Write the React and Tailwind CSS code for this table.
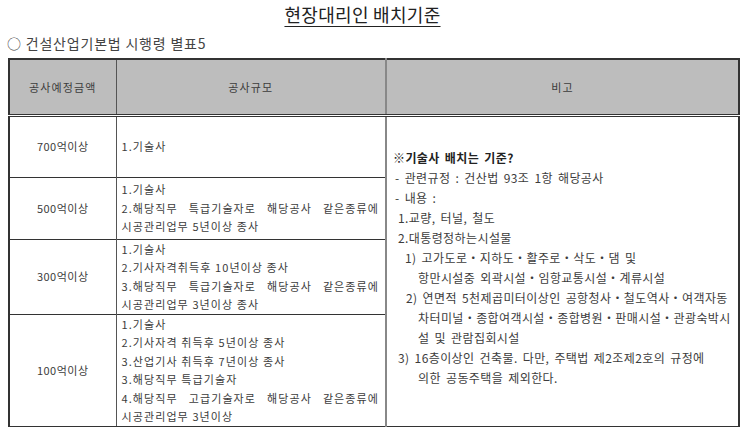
import React from 'react';

const font = { fontFamily: '"Noto Sans CJK KR", "Noto Sans", sans-serif' };

const rows = [
  { amount: '700억이상', h: 'h-[62px]', lines: [{ t: '1.기술사' }] },
  {
    amount: '500억이상',
    h: 'h-[62px]',
    lines: [
      { t: '1.기술사' },
      { t: '2.해당직무 특급기술자로 해당공사 같은종류에', j: true },
      { t: '시공관리업무 5년이상 종사' },
    ],
  },
  {
    amount: '300억이상',
    h: 'h-[74px]',
    lines: [
      { t: '1.기술사' },
      { t: '2.기사자격취득후 10년이상 종사' },
      { t: '3.해당직무 특급기술자로 해당공사 같은종류에', j: true },
      { t: '시공관리업무 3년이상 종사' },
    ],
  },
  {
    amount: '100억이상',
    h: 'h-[111px]',
    lines: [
      { t: '1.기술사' },
      { t: '2.기사자격 취득후 5년이상 종사' },
      { t: '3.산업기사 취득후 7년이상 종사' },
      { t: '3.해당직무 특급기술자' },
      { t: '4.해당직무 고급기술자로 해당공사 같은종류에', j: true },
      { t: '시공관리업무 3년이상' },
    ],
  },
];

const notes = [
  { t: '- 관련규정 : 건산법 93조 1항 해당공사', cls: 'pl-[2px]' },
  { t: '- 내용 :', cls: 'pl-[2px]' },
  { t: '1.교량, 터널, 철도', cls: 'pl-[5px]' },
  { t: '2.대통령정하는시설물', cls: 'pl-[5px]' },
  { t: '1) 고가도로・지하도・활주로・삭도・댐 및', cls: 'pl-[12px]' },
  { t: '항만시설중 외곽시설・임항교통시설・계류시설', cls: 'pl-[25px]' },
  { t: '2) 연면적 5천제곱미터이상인 공항청사・철도역사・여객자동', cls: 'pl-[13px]' },
  { t: '차터미널・종합여객시설・종합병원・판매시설・관광숙박시', cls: 'pl-[25px]' },
  { t: '설 및 관람집회시설', cls: 'pl-[25px]' },
  { t: '3) 16층이상인 건축물. 다만, 주택법 제2조제2호의 규정에', cls: 'pl-[5px]' },
  { t: '의한 공동주택을 제외한다.', cls: 'pl-[25px]' },
];

export default function App() {
  return (
    <div style={font} className="w-[743px] h-[427px] bg-white overflow-hidden text-[#3c3c3c]">
      <div className="flex justify-center pt-[2px] pr-[18px] h-[33px]">
        <h1 className="text-[18px] leading-[25px] tracking-[0.3px] text-[#222] underline underline-offset-[4px] decoration-1">
          현장대리인 배치기준
        </h1>
      </div>
      <div className="pl-[7px] text-[14px] leading-[20px] tracking-[0.8px] text-[#444] h-[25px]">
        ○ 건설산업기본법 시행령 별표5
      </div>
      <table className="ml-[8px] w-[732px] border-collapse table-fixed border-2 border-[#333] text-[11px] tracking-[1.1px]">
        <colgroup>
          <col className="w-[107px]" />
          <col className="w-[270px]" />
          <col />
        </colgroup>
        <thead>
          <tr className="h-[56px] bg-[#bdbdbd] border-b-[3px] border-double border-[#333]">
            <th className="font-normal border-r border-[#555]">공사예정금액</th>
            <th className="font-normal border-r-2 border-[#888]">공사규모</th>
            <th className="font-normal">비고</th>
          </tr>
        </thead>
        <tbody>
          {rows.map((r, i) => (
            <tr key={r.amount} className={`${r.h} border-b border-[#333]`}>
              <td className="text-center align-middle border-r border-[#555] tracking-[0.5px]">{r.amount}</td>
              <td className="align-middle border-r-2 border-[#888] pl-[5px] pr-[6px]">
                {r.lines.map((l, k) => (
                  <div
                    key={k}
                    className={`leading-[18.5px] whitespace-nowrap ${l.j ? 'text-justify [text-align-last:justify]' : ''}`}
                  >
                    {l.t}
                  </div>
                ))}
              </td>
              {i === 0 && (
                <td rowSpan={4} className="align-middle pl-[6px] pb-[6px] text-[12px] tracking-[0.4px] [word-spacing:2px]">
                  <div className="font-bold text-[#222] leading-[20px]">※기술사 배치는 기준?</div>
                  {notes.map((n, k) => (
                    <div key={k} className={`leading-[20px] whitespace-nowrap ${n.cls}`}>
                      {n.t}
                    </div>
                  ))}
                </td>
              )}
            </tr>
          ))}
        </tbody>
      </table>
    </div>
  );
}
